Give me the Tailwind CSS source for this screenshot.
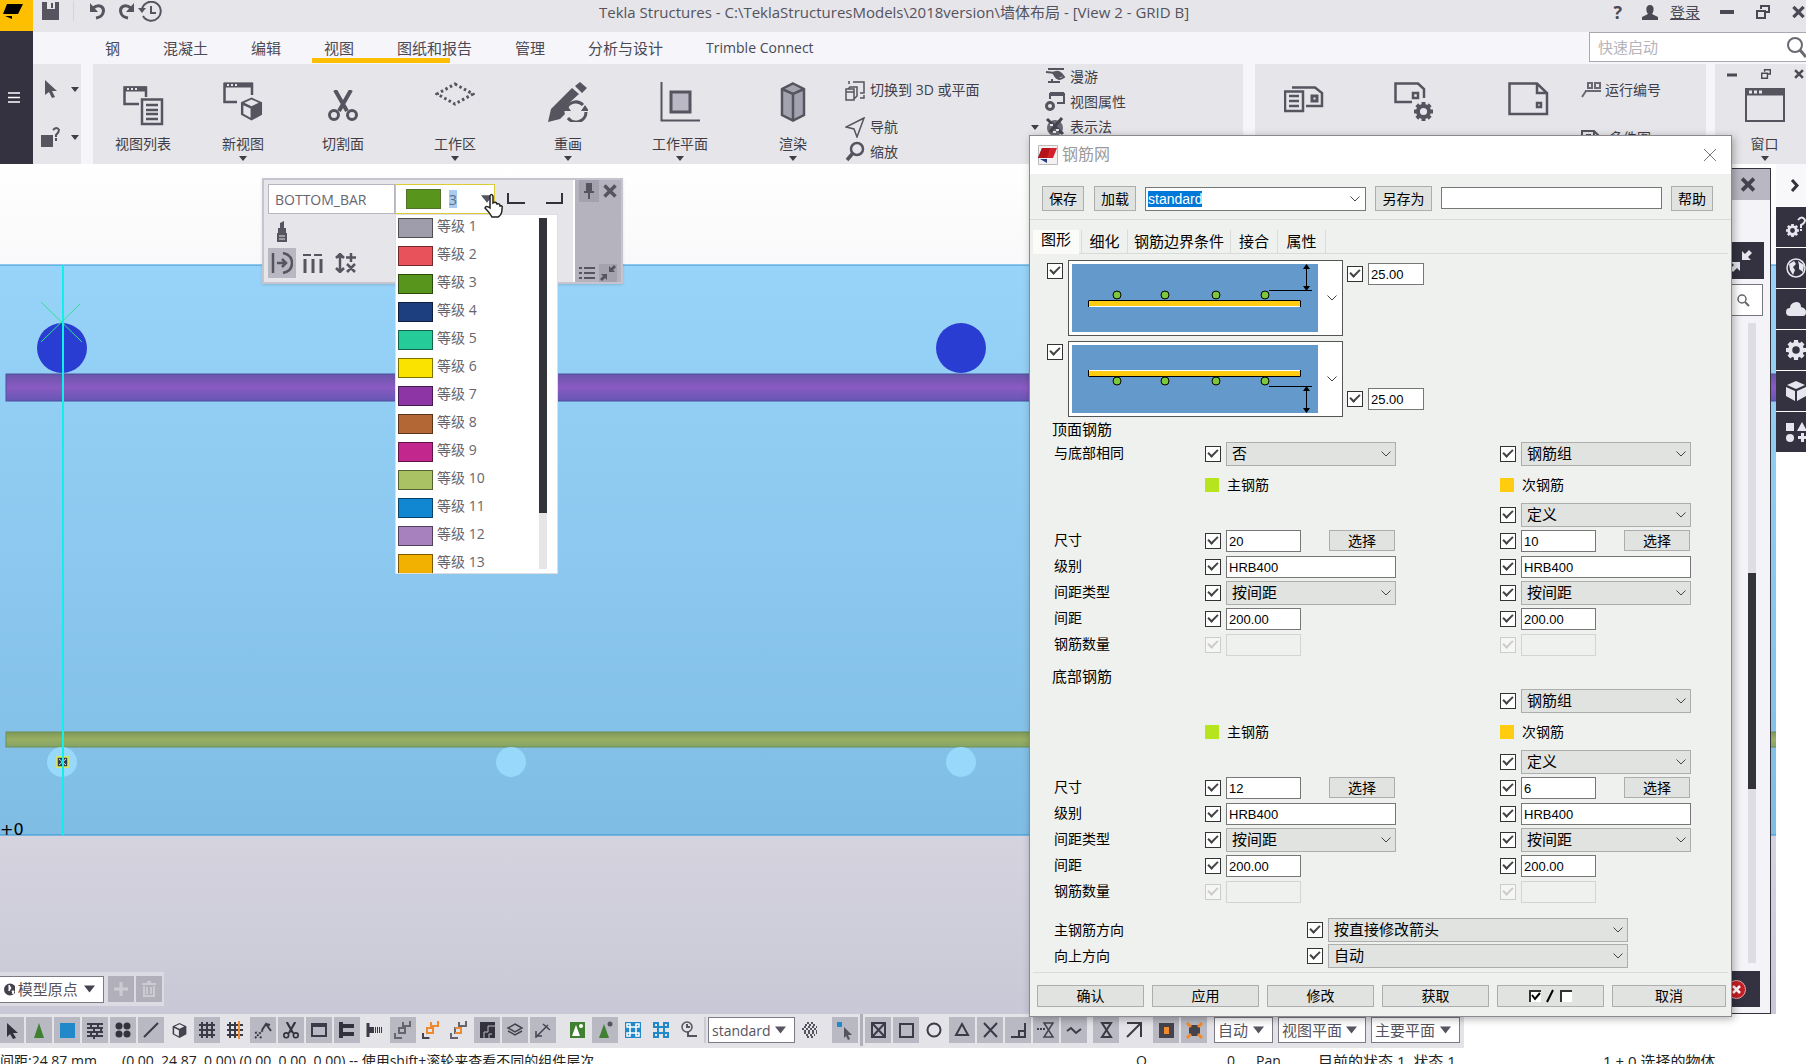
<!DOCTYPE html>
<html lang="zh-CN">
<head>
<meta charset="utf-8">
<title>Tekla Structures</title>
<script src="https://cdn.jsdelivr.net/npm/@tailwindcss/browser@4"></script>
</head>
<body class="h-screen overflow-hidden bg-white font-['Open_Sans','Noto_Sans_CJK_SC',sans-serif] text-[#3f3e48]">
<svg class="hidden">
  <symbol id="tri" viewBox="0 0 8 5"><path d="M0 0h8L4 5z" fill="currentColor"/></symbol>
  <symbol id="chev" viewBox="0 0 10 6"><path d="M0.5 0.5L5 5L9.500 0.5" fill="none" stroke="currentColor"/></symbol>
  <symbol id="restore" viewBox="0 0 14 14"><path d="M5 4V1h8v6H9M1 6h8v7H1z" fill="none" stroke="currentColor" stroke-width="2"/></symbol>
  <symbol id="cross" viewBox="0 0 14 14"><path d="M1.500 1.500L12.500 12.500M12.500 1.500L1.500 12.500" fill="none" stroke="currentColor" stroke-width="3.500"/></symbol>
  <symbol id="gear" viewBox="0 0 24 24"><path d="M12 5a7 7 0 1 0 0 14a7 7 0 1 0 0-14" fill="none" stroke="currentColor" stroke-width="5"/><path d="M12 0v5M12 19v5M0 12h5M19 12h5M3.500 3.500L7 7M17 17l3.500 3.500M20.500 3.500L17 7M7 17l-3.500 3.500" stroke="currentColor" stroke-width="5"/></symbol>
  <symbol id="cube" viewBox="0 0 24 26"><path d="M12 1L23 6V19L12 25L1 19V6z" fill="currentColor"/><path d="M3.500 9L11 12.500V22L3.500 18z" fill="#e6e6ea"/><path d="M12 3L19.500 6.500L12 10L4.500 6.500z" fill="#e6e6ea"/></symbol>
  <symbol id="scissors" viewBox="0 0 30 32"><path d="M7 0L19 21M23 0L11 21" stroke="currentColor" stroke-width="4" fill="none"/><circle cx="6" cy="25" r="4.500" fill="none" stroke="currentColor" stroke-width="3"/><circle cx="24" cy="25" r="4.500" fill="none" stroke="currentColor" stroke-width="3"/></symbol>
  <symbol id="steps" viewBox="0 0 20 20"><path d="M10 2V6H17V1M6 13H12V8H6zM2 13V18H9" fill="none" stroke="currentColor" stroke-width="2"/></symbol>
</svg>

<div class="flex h-full flex-col">
  <!-- Title, menu and ribbon -->
  <header class="flex shrink-0">
    <div class="flex w-[33px] shrink-0 flex-col bg-[#343241]">
      <div class="h-[31px] bg-[#fdbf00]"><svg width="33" height="31"><path d="M7 4H23L18 14H3zM5 16h7v3z" fill="#000"/></svg></div>
      <button aria-label="菜单" class="flex flex-1 items-center justify-center pr-[5px] text-white"><svg width="12" height="11"><path d="M0 1h12M0 5.500h12M0 10h12" stroke="#fff" stroke-width="1.500"/></svg></button>
    </div>
    <div class="min-w-0 flex-1">
      <div class="relative flex h-8 items-center justify-between bg-[#e6e5ea] pl-2">
        <div class="flex items-start gap-3 pb-2 text-[#56555f]">
          <button aria-label="保存"><svg width="20" height="20"><path d="M1 1h17v18H1z" fill="currentColor"/><path d="M6 1h8v7H6z" fill="#e6e5ea"/><path d="M10 2h2v5h-2z" fill="currentColor"/></svg></button>
          <span class="mr-1 h-5 w-px bg-[#d5d4dc]"></span>
          <button aria-label="撤销"><svg width="16" height="20"><path d="M3 7C9 2 15 6 13 12Q12 16 6 17" fill="none" stroke="currentColor" stroke-width="3"/><path d="M0 2v9h8z" fill="currentColor"/></svg></button>
          <button aria-label="重做"><svg width="16" height="20"><path d="M13 7C7 2 1 6 3 12Q4 16 10 17" fill="none" stroke="currentColor" stroke-width="3"/><path d="M16 2v9H8z" fill="currentColor"/></svg></button>
          <button aria-label="历史" class="-ml-2"><svg width="24" height="22"><path d="M4 8A9.500 9.500 0 1 1 5 15" fill="none" stroke="currentColor" stroke-width="2"/><path d="M0 7h8l-4 5z" fill="currentColor"/><path d="M13 5v7h5" fill="none" stroke="currentColor" stroke-width="2"/></svg></button>
        </div>
        <h1 class="absolute inset-x-0 top-0 left-[566px] w-fit text-[15px] leading-6 whitespace-nowrap text-[#54535d]">Tekla Structures - C:\TeklaStructuresModels\2018version\墙体布局 - [View 2 - GRID B]</h1>
        <div class="flex items-center gap-5 pr-px pb-2 text-[#4a4954]">
          <button aria-label="帮助" class="text-[18px] leading-6 font-bold">?</button>
          <div class="flex items-center gap-3"><svg width="16" height="15"><path d="M8 0c5 0 4 7 2 9l6 3v3H0v-3l6-3C4 7 3 0 8 0" fill="currentColor"/></svg><a href="#" class="text-[15px] leading-6 underline">登录</a></div>
          <button aria-label="最小化"><svg width="14" height="14"><path d="M0 7h14" stroke="currentColor" stroke-width="4"/></svg></button>
          <button aria-label="还原" class="mx-[2px]"><svg width="14" height="14"><use href="#restore"/></svg></button>
          <button aria-label="关闭"><svg width="13" height="14"><use href="#cross"/></svg></button>
        </div>
      </div>
      <div class="flex h-8 items-center justify-between bg-[#f5f5fa]">
        <nav class="flex gap-[43px] pl-[72px] text-[15px] leading-[30px] whitespace-nowrap text-[#4a4954]">
          <a href="#">钢</a><a href="#">混凝土</a><a href="#">编辑</a>
          <a href="#" class="relative">视图<span class="absolute -left-3 top-[25px] h-[5px] w-[138px] bg-[#fdbf00]"></span></a>
          <a href="#" class="relative">图纸和报告</a><a href="#">管理</a><a href="#">分析与设计</a><a href="#" class="text-[14px]">Trimble Connect</a>
        </nav>
        <label class="flex h-[30px] w-[217px] items-center self-start overflow-hidden border border-r-0 border-[#aaa9b2] bg-white pl-2">
          <input type="search" placeholder="快速启动" class="w-0 flex-1 text-[15px] outline-none placeholder:text-[#b4b4ba]">
          <svg width="20" height="22" class="shrink-0"><circle cx="9" cy="9" r="7" fill="none" stroke="#6a6973" stroke-width="2"/><path d="M14 14l6 7" stroke="#6a6973" stroke-width="3"/></svg>
        </label>
      </div>
      <div class="flex h-[100px] bg-[#e6e6ea] text-[14px] leading-5 whitespace-nowrap">
        <div class="flex w-12 shrink-0 flex-col gap-7 pt-4 pl-3">
          <button aria-label="选择" class="flex items-center gap-3"><svg width="14" height="18"><path d="M0 0l12 11H7l3 6-3 1-3-6-4 3z" fill="#55545f"/></svg><svg width="8" height="5"><use href="#tri"/></svg></button>
          <button aria-label="查询" class="-ml-1 flex items-center gap-[10px]"><svg width="20" height="22"><path d="M0 9h12v12H0z" fill="#55545f"/><path d="M12 4q4-4 6 0q0 2-3 5v2M15 12v3" stroke="#55545f" stroke-width="2" fill="none"/></svg><svg width="8" height="5"><use href="#tri"/></svg></button>
        </div>
        <div class="w-3 shrink-0 bg-[#f5f5fa]"></div>
        <div class="flex shrink-0 text-[#3f3e48]">
          <button class="flex w-[100px] flex-col items-center pt-[18px]"><svg width="40" height="40" class="overflow-visible" fill="none" stroke="#55545f" stroke-width="2.500"><path d="M16 22H1.500V5.500H23V15"/><path d="M1 7h22" stroke-width="5"/><path d="M4 7h11" stroke="#e6e6ea" stroke-width="2" stroke-dasharray="2 2"/><path d="M19 17.500h20V42H19zM23 23h12M23 28h12M23 32h12M23 37h12" stroke-width="2.500"/></svg><span class="mt-3">视图列表</span></button>
          <button class="flex w-[100px] flex-col items-center pt-[18px]"><svg width="40" height="40" fill="none" stroke="#55545f" stroke-width="2.500"><path d="M14 20H1.500V2H29V13"/><path d="M1 3h29" stroke-width="5"/><path d="M4 3h11" stroke="#e6e6ea" stroke-width="2" stroke-dasharray="2 2"/><use href="#cube" x="17" y="14" width="23" height="26" color="#55545f" stroke="none"/></svg><span class="mt-3">新视图</span><svg width="8" height="5" class="mt-[2px]"><use href="#tri"/></svg></button>
          <button class="flex w-[100px] flex-col items-center pt-[18px]"><svg width="40" height="40"><use href="#scissors" x="5" y="8" width="30" height="32" color="#55545f"/></svg><span class="mt-3">切割面</span></button>
          <button class="flex w-[124px] flex-col items-center pt-[18px]"><svg width="40" height="40"><path d="M20 2L38 12L20 22L2 12z" fill="none" stroke="#55545f" stroke-width="3" stroke-dasharray="2.500 2.600"/></svg><span class="mt-3">工作区</span><svg width="8" height="5" class="mt-[2px]"><use href="#tri"/></svg></button>
          <button class="flex w-[102px] flex-col items-center pt-[18px]"><svg width="40" height="40"><path d="M0 40L3 27L24 6L31 12L20 22Q15 28 17 32L12 37zM27 4L32 0L39 6L34 11z" fill="#55545f"/><path d="M18 28A10 10 0 0 1 35 23M38 30A10 10 0 0 1 20 36" fill="none" stroke="#55545f" stroke-width="3"/><path d="M14 29h9l-4-6zM33 29h8l-4-6z" fill="#55545f"/></svg><span class="mt-3">重画</span><svg width="8" height="5" class="mt-[2px]"><use href="#tri"/></svg></button>
          <button class="flex w-[122px] flex-col items-center pt-[18px]"><svg width="40" height="40"><path d="M1.500 0V38.500H40" fill="none" stroke="#55545f" stroke-width="2"/><path d="M11 10h19v20H11z" fill="#b9b8c4" stroke="#55545f" stroke-width="3"/></svg><span class="mt-3">工作平面</span><svg width="8" height="5" class="mt-[2px]"><use href="#tri"/></svg></button>
          <button class="flex w-[104px] flex-col items-center pt-[18px]"><svg width="40" height="40" fill="#a3a2af" stroke="#55545f" stroke-width="2.500"><path d="M20 1.500L31 7V33L20 38.500L9 33V7z"/><path d="M9 7L20 12L31 7M20 12V38" fill="none"/></svg><span class="mt-3">渲染</span><svg width="8" height="5" class="mt-[2px]"><use href="#tri"/></svg></button>
        </div>
        <div class="flex w-[192px] shrink-0 flex-col pt-[14px]">
          <button class="mb-3 flex h-[25px] items-center gap-1"><svg width="21" height="21" fill="none" stroke="#55545f" stroke-width="1.500"><path d="M1 9h8v11H1zM3 9l2-2h7v9l-3 3M1 12h8M4 4V1M8 2H19V13h-4M15 18h4v-3"/></svg>切换到 3D 或平面</button>
          <button class="flex h-[25px] items-center gap-1"><svg width="21" height="21"><path d="M19 1L1 10L9 12L12 20z" fill="none" stroke="#55545f" stroke-width="1.500"/></svg>导航</button>
          <button class="flex h-[25px] items-center gap-1"><svg width="21" height="21"><circle cx="12" cy="8" r="6" fill="none" stroke="#55545f" stroke-width="2.500"/><path d="M8 12L2 19" stroke="#55545f" stroke-width="3.500"/></svg>缩放</button>
        </div>
        <div class="flex w-[206px] shrink-0">
          <svg width="8" height="5" class="mt-[61px] ml-[-6px]"><use href="#tri"/></svg>
          <div class="ml-[6px] flex flex-col">
            <button class="flex h-[25px] items-center gap-1"><svg width="21" height="21"><path d="M3 3h16M1 6L10 7M8 7q6-4 11 4q-6 5-10-3zM3 16h12M7 13v3" fill="none" stroke="#55545f" stroke-width="2"/><path d="M9 7q5-3 9 3l-6 3z" fill="#55545f"/></svg>漫游</button>
            <button class="flex h-[25px] items-center gap-1"><svg width="21" height="21" fill="none" stroke="#55545f" stroke-width="2"><path d="M5 8V3H19V12H12"/><path d="M5 3h14" stroke-width="4"/><circle cx="5" cy="15" r="3.500" stroke-width="3"/></svg>视图属性</button>
            <button class="flex h-[25px] items-center gap-1"><svg width="21" height="21"><circle cx="10" cy="12" r="8" fill="#6a6973"/><path d="M2 3L18 18M17 2L5 16" stroke="#44434d" stroke-width="3"/><path d="M5 9h3M11 14h3M8 16h3" stroke="#e6e6ea" stroke-width="2"/></svg>表示法</button>
          </div>
        </div>
        <div class="w-3 shrink-0 bg-[#f5f5fa]"></div>
        <div class="flex min-w-0 flex-1 items-start pl-[29px]">
          <button aria-label="图纸列表" class="pt-[18px]"><svg width="40" height="40" fill="none" stroke="#55545f" stroke-width="2.500"><path d="M1 9.500h18V29H1zM5 14h10M5 19h10M5 24h10M8 5.500H31L38 11V24H22"/><path d="M28 14h5v5h-5z" stroke-width="3"/></svg></button>
          <button aria-label="图纸设置" class="ml-[70px] pt-[18px]"><svg width="40" height="40" fill="none" stroke="#55545f" stroke-width="2.500"><path d="M18 20H1.500V1.500H24L30 7V16"/><path d="M19 11h5v5h-5z"/><use href="#gear" x="20" y="20" width="19" height="19" color="#55545f"/></svg></button>
          <button aria-label="图纸" class="ml-[74px] pt-[18px]"><svg width="41" height="40" fill="none" stroke="#55545f" stroke-width="2.500"><path d="M1.500 1.500H29L39 11V32H1.500zM29 1.500V11H39"/><path d="M29 21h4v4h-4z"/></svg></button>
          <div class="ml-8 flex flex-col gap-7 pt-4">
            <button class="flex items-center gap-1"><svg width="20" height="16" fill="none" stroke="#6a6973" stroke-width="2"><path d="M7 1h4v5H7zM14 1h5v5h-5zM4 9h16M5 9L1 15"/></svg>运行编号</button>
            <button class="flex items-center gap-2"><svg width="20" height="16" fill="none" stroke="#55545f" stroke-width="2"><path d="M1 16V1h12l6 6v9M5 5h4v5M13 1v6"/></svg>多件图</button>
          </div>
        </div>
        <div class="w-[9px] shrink-0 bg-[#f5f5fa]"></div>
        <div class="flex w-[91px] shrink-0 flex-col">
          <div class="flex items-center justify-between pt-1 pr-[2px] pl-3 text-[#4a4954]"><button aria-label="最小化视图"><svg width="10" height="12"><path d="M0 7h10" stroke="currentColor" stroke-width="3"/></svg></button><button aria-label="还原视图"><svg width="10" height="10"><use href="#restore"/></svg></button><button aria-label="关闭视图"><svg width="10" height="10"><use href="#cross"/></svg></button></div>
          <button class="ml-2 flex flex-col items-center pt-2"><svg width="40" height="34" fill="none" stroke="#55545f" stroke-width="2"><path d="M1 1h38v32H1z"/><path d="M1 4h38" stroke-width="7"/><path d="M4 4h13" stroke="#e6e6ea" stroke-width="3" stroke-dasharray="3 2"/></svg><span class="mt-3">窗口</span><svg width="8" height="5" class="mt-[2px]"><use href="#tri"/></svg></button>
        </div>
      </div>
    </div>
  </header>

  <!-- Model view with docked side pane -->
  <main class="flex min-h-0 flex-1">
    <section class="relative min-w-0 flex-1 overflow-hidden bg-linear-to-b from-white to-[#c9c8d6]">
      <svg width="100%" height="100%" class="block">
        <defs>
          <linearGradient id="sky" x2="0" y2="1"><stop offset="0" stop-color="#98d4f9"/><stop offset="1" stop-color="#80bde5"/></linearGradient>
          <linearGradient id="violet" x2="0" y2="1"><stop offset="0" stop-color="#6855a8"/><stop offset=".5" stop-color="#8a5bc2"/><stop offset="1" stop-color="#6657b4"/></linearGradient>
          <linearGradient id="olive" x2="0" y2="1"><stop offset="0" stop-color="#7f9a58"/><stop offset=".5" stop-color="#98ae63"/><stop offset="1" stop-color="#84a566"/></linearGradient>
        </defs>
        <rect x="-2" y="101" width="102%" height="570" fill="url(#sky)" stroke="#2b95d6"/>
        <rect x="6" y="210" width="100%" height="27" fill="url(#violet)" stroke="#4b509f"/>
        <rect x="6" y="568" width="100%" height="15" fill="url(#olive)" stroke="#6f8d55"/>
        <circle cx="62" cy="184" r="25" fill="#2a3dd2"/><circle cx="961" cy="184" r="25" fill="#2a3dd2"/>
        <g fill="#98d8fa"><circle cx="62" cy="598" r="15"/><circle cx="511" cy="598" r="15"/><circle cx="961" cy="598" r="15"/></g>
        <path d="M41 138L82 178M80 140L41 178" stroke="#2fe38d"/>
        <rect x="57" y="593" width="11" height="10" fill="#333b52" stroke="#e8ea3a" stroke-width="1.500"/><path d="M59 595l7 6M66 595l-7 6" stroke="#cfe5ff"/>
        <path d="M63 101V671" stroke="#10efe8" stroke-width="2"/>
        <text x="0" y="671" font-size="16" fill="#000" font-family="DejaVu Sans">+0</text>
      </svg>

      <!-- Contextual toolbar -->
      <div class="absolute top-[14px] left-[262px] flex h-[106px] w-[361px] border-2 border-[#c6c5cf] bg-[#e6e6ea] shadow">
        <div class="flex-1 border-r-2 border-white pt-1 pl-1">
          <div class="flex h-[30px] items-center">
            <input aria-label="名称" value="BOTTOM_BAR" class="h-full w-[127px] border border-[#b7b6bf] bg-white px-[6px] text-[14px] text-[#66656e]">
            <label class="flex h-full w-[100px] items-center gap-2 border border-[#dccb32] bg-white pl-[10px]">
              <span class="h-5 w-[35px] border border-[#54702f] bg-[#57951c]"></span>
              <input aria-label="等级" value="3" class="field-sizing-content h-[18px] bg-[#a9cdf0] text-[14px] text-[#5a6e88]">
              <svg width="12" height="8" class="ml-[16px] text-[#55545f]"><use href="#tri"/></svg>
            </label>
            <button aria-label="起点弯钩" class="ml-3"><svg width="19" height="12"><path d="M1 0V10H18" fill="none" stroke="#33323c" stroke-width="2"/></svg></button>
            <button aria-label="终点弯钩" class="ml-[19px]"><svg width="19" height="12"><path d="M1 10H17V0" fill="none" stroke="#33323c" stroke-width="2"/></svg></button>
          </div>
          <button aria-label="画笔" class="ml-2 block h-[34px]"><svg width="12" height="21"><path d="M4 2L8 0V7h2v5H2V7h2zM1 12h10v9H1z" fill="#55545f"/><path d="M3 15h6M3 18h6" stroke="#e6e6ea"/></svg></button>
          <div class="flex items-center">
            <button aria-label="偏移" class="flex h-[30px] w-[28px] items-center justify-center bg-[#b9b8c2]"><svg width="22" height="22" fill="none" stroke="#55545f" stroke-width="2.500"><path d="M2 1V21M6 11h9M11 7l4 4l-4 4M12 1q9 2 9 10t-9 10"/></svg></button>
            <button aria-label="间距" class="ml-[6px]"><svg width="22" height="20" fill="none" stroke="#55545f" stroke-width="3"><path d="M3 6V20M11 6V20M19 6V20"/><path d="M1 2h8M12 2h8" stroke-width="2"/></svg></button>
            <button aria-label="增减" class="ml-[11px]"><svg width="22" height="20" fill="none" stroke="#55545f" stroke-width="2.500"><path d="M5 2V18M1 5l4-4l4 4M1 15l4 4l4-4M16 0V9M11 4.500h10M12 11l8 8M20 11l-8 8"/></svg></button>
          </div>
        </div>
        <div class="flex w-[46px] flex-col justify-between bg-[#b4b3be] p-1 pt-0 text-[#55545f]">
          <div class="flex items-center gap-1"><button aria-label="固定" class="flex h-[22px] w-5 items-center justify-center bg-[#a3a2ae]"><svg width="12" height="16"><path d="M3 0h6v8h2v2H7v6H5v-6H1V8h2z" fill="currentColor"/></svg></button><button aria-label="关闭工具栏"><svg width="14" height="14"><use href="#cross"/></svg></button></div>
          <div class="-mb-1 flex items-center gap-1"><button aria-label="列表"><svg width="16" height="14"><path d="M0 2h3M5 2h11M0 7h3M5 7h11M0 12h3M5 12h11" stroke="currentColor" stroke-width="2"/></svg></button><button aria-label="折叠" class="bg-[#a3a2ae]"><svg width="18" height="18" fill="#55545f"><path d="M2 10h6v6l-2-2-3 3-2-2 3-3zM16 8h-6V2l2 2 3-3 2 2-3 3z"/></svg></button></div>
        </div>
      </div>
      <!-- Open class list -->
      <div class="absolute top-[50px] left-[395px] flex h-[360px] w-[163px] overflow-hidden border border-[#dddde2] bg-white">
        <ul id="classes" class="flex flex-1 flex-col gap-2 pt-[3px] pl-[2px]" role="listbox" aria-label="等级"></ul>
        <div class="mr-[10px] mt-[3px] mb-1 w-2 bg-[#e6e6e8]"><div class="h-[295px] bg-[#33333a]"></div></div>
      </div>
      <svg width="20" height="25" class="absolute top-[29px] left-[484px]"><path d="M6 14V3q1.500-3 3 0V10q3-2 4 1q3-1 3 2q3-1 2 3q0 6-4 8H8Q6 20 1 15q1-3 5 0z" fill="#fff" stroke="#222" stroke-width="1.500"/></svg>

      <!-- Origin picker -->
      <div class="absolute bottom-2 left-0 flex h-[34px] items-center gap-[2px] bg-[#dcdbe3] pr-[2px]">
        <label class="relative mr-[2px] flex h-[27px] w-[104px] items-center border border-l-0 border-[#7c7b85] bg-white pl-1">
          <svg width="12" height="13"><circle cx="6" cy="6.500" r="5" fill="#44434d" stroke="#44434d" stroke-width="2"/><path d="M5 2l2 3-2 3zM8 8l2 0-1 3z" fill="#fff" stroke="#fff"/></svg>
          <select aria-label="原点" class="h-full w-full appearance-none pl-[3px] text-[15px] text-[#55545f]"><option>模型原点</option></select>
          <svg width="11" height="8" class="pointer-events-none absolute right-2 text-[#44434d]"><use href="#tri"/></svg>
        </label>
        <button aria-label="添加" class="flex h-[26px] w-[26px] items-center justify-center bg-[#b1b0ba]"><svg width="16" height="16"><path d="M8 1v14M1 8h14" stroke="#cccbd4" stroke-width="3"/></svg></button>
        <button aria-label="删除" class="flex h-[26px] w-[26px] items-center justify-center bg-[#b1b0ba]"><svg width="14" height="16" fill="none" stroke="#cccbd4" stroke-width="2"><path d="M0 3h14M5 1h4M2 5v10h10V5M5 6v7M9 6v7"/></svg></button>
      </div>

      <!-- Property pane behind the dialog -->
      <aside class="absolute top-1 right-[5px] bottom-0 flex w-[240px] flex-col items-end border border-[#33323c] bg-[#f4f4f8]">
        <div class="flex h-[31px] w-full items-center justify-end bg-[#b9b8c2] pr-[14px] text-[#44434d]"><button aria-label="关闭窗格"><svg width="16" height="15"><use href="#cross"/></svg></button></div>
        <button aria-label="折叠窗格" class="mt-[42px] mr-[6px] flex h-[37px] w-[60px] items-center justify-end bg-[#343241] pr-[12px]"><svg width="22" height="22" fill="#e6e6ee"><path d="M1 12h9v9l-3-3-4 4-3-3 4-4zM21 10h-9V1l3 3 4-4 3 3-4 4z"/></svg></button>
        <label class="mt-[5px] mr-[7px] flex h-8 w-[150px] items-center justify-end border border-[#77767f] bg-white pr-3"><input aria-label="搜索属性" class="w-24"><svg width="13" height="13"><circle cx="5" cy="5" r="4" fill="none" stroke="#66656e" stroke-width="1.500"/><path d="M8 8l4 4" stroke="#66656e" stroke-width="2"/></svg></label>
        <div class="mt-[7px] mr-[14px] w-2 flex-1 bg-[#dddde3]"><div class="mt-[250px] h-[216px] bg-[#33333a]"></div></div>
        <button aria-label="取消" class="mt-2 mr-[10px] mb-[6px] flex h-[36px] w-[80px] items-center justify-end bg-[#343241] pr-[14px]"><svg width="19" height="19"><circle cx="9.500" cy="9.500" r="9" fill="#c51f26" stroke="#e8a7a7"/><path d="M6 6l7 7M13 6l-7 7" stroke="#fff" stroke-width="2.500"/></svg></button>
      </aside>
    </section>

    <nav class="flex w-[30px] shrink-0 flex-col gap-px overflow-hidden bg-white">
      <button aria-label="展开" class="flex h-[42px] items-center justify-center bg-[#f8f8fb] pl-2"><svg width="10" height="13"><path d="M2 1l5 5.500L2 12" fill="none" stroke="#33323c" stroke-width="3"/></svg></button>
      <button aria-label="应用帮助" class="h-10 bg-[#343241] pl-[10px] text-[#e6e6ee]"><svg width="20" height="22"><use href="#gear" x="0" y="8" width="13" height="13"/><path d="M12 4q4-5 7 0q0 3-4 5v3M15 13v2" fill="none" stroke="currentColor" stroke-width="2"/></svg></button>
      <button aria-label="在线" class="h-10 bg-[#343241] pl-[10px] text-[#e6e6ee]"><svg width="20" height="20"><circle cx="10" cy="10" r="9" fill="none" stroke="currentColor" stroke-width="1.500"/><path d="M3 6l5-3 2 3-3 3 2 3-2 5-3-5zM12 3l6 4-1 7-4-3v-4z" fill="currentColor"/></svg></button>
      <button aria-label="云" class="h-10 bg-[#343241] pl-[10px] text-[#e6e6ee]"><svg width="20" height="20"><path d="M4 17a4 4 0 0 1 0-8q0-5 6-6q5 0 5 5q5 1 5 5q0 4-3 4z" fill="currentColor"/></svg></button>
      <button aria-label="设置" class="h-10 bg-[#343241] pl-[10px] text-[#e6e6ee]"><svg width="20" height="20"><use href="#gear"/></svg></button>
      <button aria-label="组件" class="h-10 bg-[#343241] pl-[10px] text-[#e6e6ee]"><svg width="20" height="20"><path d="M10 0l9 4-9 4-9-4zM0 6l9 4v10l-9-5zM20 6l-9 4v10l9-5z" fill="currentColor"/></svg></button>
      <button aria-label="形状" class="h-10 bg-[#343241] pl-[10px] text-[#e6e6ee]"><svg width="20" height="20"><path d="M0 1h8v8H0zM11 9l5-9 5 9zM15 11h3v3h3v3h-3v3h-3v-3h-3v-3h3z" fill="currentColor"/><circle cx="4" cy="16" r="4" fill="currentColor"/></svg></button>
    </nav>
  </main>

  <!-- Selection and snapping switches -->
  <footer class="shrink-0">
    <div class="flex h-[34px] w-[1464px] items-center gap-[2px] overflow-hidden bg-[#e3e3e8] pb-[2px] text-[15px] text-[#55545f]">
      <div id="switches" class="-ml-[2px] flex items-center gap-[2px]"></div>
      <span class="h-[26px] w-[2px] bg-[#cccbd4]"></span>
      <label class="relative flex h-[26px] w-[87px] items-center border border-[#7c7b85] bg-white"><select aria-label="过滤" class="h-full w-full appearance-none pl-[3px] text-[14px]"><option>standard</option></select><svg width="11" height="8" class="pointer-events-none absolute right-2"><use href="#tri"/></svg></label>
      <button aria-label="过滤设置" class="flex h-[26px] w-[26px] items-center justify-center"><svg width="16" height="16" fill="none" stroke="#55545f" stroke-width="2" stroke-dasharray="2 2"><path d="M5 1h7M2 5h13M2 9h13M4 13h9"/><path d="M3 3h11M0 7h16M2 11h13M5 15h7"/></svg></button>
      <span class="w-[5px]"></span>
      <button aria-label="直接修改" class="flex h-[26px] w-[26px] items-center justify-center bg-[#b9b9c3]"><svg width="18" height="20"><path d="M1 2h5v5H1z" fill="#2188c9"/><path d="M8 7l8 8h-4l2 4-2 1-2-4-2 2z" fill="#55545f"/></svg></button>
      <span class="h-[32px] w-[3px] bg-[#b1b0ba]"></span>
      <div id="snaps" class="flex items-center gap-[2px]"></div>
      <span class="w-[3px]"></span>
      <div class="flex gap-[5px]">
        <label class="relative flex h-[26px] w-[59px] items-center border border-[#7c7b85] bg-white"><select aria-label="捕捉模式" class="h-full w-full appearance-none pl-[3px]"><option>自动</option></select><svg width="11" height="8" class="pointer-events-none absolute right-2"><use href="#tri"/></svg></label>
        <label class="relative flex h-[26px] w-[88px] items-center border border-[#7c7b85] bg-white"><select aria-label="平面" class="h-full w-full appearance-none pl-[3px]"><option>视图平面</option></select><svg width="11" height="8" class="pointer-events-none absolute right-2"><use href="#tri"/></svg></label>
        <label class="relative flex h-[26px] w-[89px] items-center border border-[#7c7b85] bg-white"><select aria-label="主平面" class="h-full w-full appearance-none pl-[3px]"><option>主要平面</option></select><svg width="11" height="8" class="pointer-events-none absolute right-2"><use href="#tri"/></svg></label>
      </div>
    </div>
    <div class="flex h-4 overflow-hidden bg-white pt-[2px] text-[14px] leading-[22px] whitespace-nowrap text-[#222]">
      <span class="w-[122px] shrink-0">间距:24.87 mm</span>
      <span class="w-[1014px] shrink-0">(0.00, 24.87, 0.00) (0.00, 0.00, 0.00) -- 使用shift+滚轮来查看不同的组件层次</span>
      <span class="w-[91px] shrink-0">O</span><span class="w-[29px] shrink-0">0</span><span class="w-[62px] shrink-0">Pan</span>
      <span class="w-[285px] shrink-0 text-[15px]">目前的状态 1, 状态 1</span><span class="text-[15px]">1 + 0 选择的物体</span>
    </div>
  </footer>
</div>

<!-- Rebar mesh dialog -->
<form class="absolute top-[135px] right-[74px] flex w-[703px] flex-col border border-[#8a8a90] bg-[#eff1ee] font-['Liberation_Sans','Noto_Sans_CJK_SC',sans-serif] text-[14px] leading-5 text-black shadow-[2px_2px_8px_rgba(0,0,0,0.3)]" aria-label="钢筋网">
  <div class="flex h-[38px] items-center bg-white pl-2">
    <svg width="20" height="20"><path d="M.5.5h19v19H.5z" fill="#f3f1f4" stroke="#bbb"/><path d="M4 3H19L15 13H0z" fill="#d32229"/><path d="M4 3h8l-3 10H0z" fill="#b3131a"/><path d="M2 14h7v4z" fill="#233c86"/></svg>
    <h2 class="ml-1 text-[16px] text-[#9a9a9a]">钢筋网</h2>
    <button type="button" aria-label="关闭对话框" class="mr-[15px] ml-auto"><svg width="12" height="12"><path d="M0 0l12 12M12 0L0 12" stroke="#777"/></svg></button>
  </div>
  <div class="flex h-[46px] items-center border-b border-[#d9dbd8] px-3 pt-1">
    <button type="button" class="h-[25px] w-[42px] border border-[#adadad] bg-[#e1e3e0]">保存</button>
    <button type="button" class="ml-[10px] h-[25px] w-[42px] border border-[#adadad] bg-[#e1e3e0]">加载</button>
    <label class="ml-[9px] flex h-6 w-[221px] items-center justify-between border border-[#777] bg-white pr-[5px] pl-[2px]"><input aria-label="设置文件" value="standard" class="field-sizing-content h-4 bg-[#0078d7] leading-4 text-white"><svg width="10" height="6" class="text-[#444]"><use href="#chev"/></svg></label>
    <button type="button" class="ml-[9px] h-[25px] w-[57px] border border-[#adadad] bg-[#e1e3e0]">另存为</button>
    <input aria-label="另存为名称" class="ml-[9px] h-[22px] w-[221px] self-start mt-[9px] border border-[#777] bg-white px-1">
    <button type="button" class="ml-[9px] h-[25px] w-[42px] border border-[#adadad] bg-[#e1e3e0]">帮助</button>
  </div>
  <div class="mx-[3px] mt-[10px] flex h-[24px] items-center border-b border-[#d9dbd8] text-[15px] whitespace-nowrap" role="tablist">
    <button type="button" role="tab" aria-selected="true" class="h-[24px] w-[46px] bg-[#fbfcfa] pb-1">图形</button>
    <button type="button" role="tab" class="ml-[2px] h-full w-[46px] border-l border-[#d9dbd8]">细化</button>
    <button type="button" role="tab" class="h-full w-[104px] border-x border-[#d9dbd8]">钢筋边界条件</button>
    <button type="button" role="tab" class="h-full w-[47px] border-r border-[#d9dbd8]">接合</button>
    <button type="button" role="tab" class="h-full w-[48px] border-r border-[#d9dbd8]">属性</button>
  </div>

  <div class="flex flex-col gap-[5px] pt-[6px] pl-[17px]">
    <div class="flex items-start">
      <input type="checkbox" checked aria-label="顶面保护层图" class="mt-[3px] h-4 w-4 appearance-none border border-[#333] bg-white before:ml-1 before:block before:h-[10px] before:w-[6px] before:rotate-45 before:border-r-2 before:border-b-2 before:border-[#444]">
      <button type="button" aria-label="顶面保护层" class="ml-[5px] flex h-[76px] w-[275px] items-center border border-[#555] bg-white pl-[3px]">
        <svg width="246" height="68"><path d="M0 0h246v68H0z" fill="#6499cb"/><path d="M16 36h213v7H16z" fill="#fff"/><path d="M17 37h211v5H17z" fill="#ffcc10"/><path d="M16.500 43V36.500H228.500V43M197 26.500h43M234.500 3V24" fill="none" stroke="#000"/><path d="M234.500 0l3.500 5h-7zM234.500 27l3.500-5h-7z"/><g fill="#7cc83a" stroke="#000"><circle cx="45" cy="31" r="4"/><circle cx="93" cy="31" r="4"/><circle cx="144" cy="31" r="4"/><circle cx="193" cy="31" r="4"/></g></svg>
        <svg width="10" height="6" class="ml-[9px] text-[#444]"><use href="#chev"/></svg>
      </button>
      <input type="checkbox" checked aria-label="顶面保护层厚度" class="mt-[6px] ml-1 h-4 w-4 appearance-none border border-[#333] bg-white before:ml-1 before:block before:h-[10px] before:w-[6px] before:rotate-45 before:border-r-2 before:border-b-2 before:border-[#444]">
      <input aria-label="顶面厚度" value="25.00" class="mt-[3px] ml-[5px] h-[22px] w-14 border border-[#777] bg-white px-[2px] text-[13px]">
    </div>
    <div class="flex items-start">
      <input type="checkbox" checked aria-label="底面保护层图" class="mt-[3px] h-4 w-4 appearance-none border border-[#333] bg-white before:ml-1 before:block before:h-[10px] before:w-[6px] before:rotate-45 before:border-r-2 before:border-b-2 before:border-[#444]">
      <button type="button" aria-label="底面保护层" class="ml-[5px] flex h-[76px] w-[275px] items-center border border-[#555] bg-white pl-[3px]">
        <svg width="246" height="68"><path d="M0 0h246v68H0z" fill="#6499cb"/><path d="M16 25h213v7H16z" fill="#fff"/><path d="M17 26h211v5H17z" fill="#ffcc10"/><path d="M16.500 25V31.500H228.500V25M197 41.500h43M234.500 44V66" fill="none" stroke="#000"/><path d="M234.500 41l3.500 5h-7zM234.500 68l3.500-5h-7z"/><g fill="#7cc83a" stroke="#000"><circle cx="45" cy="36" r="4"/><circle cx="93" cy="36" r="4"/><circle cx="144" cy="36" r="4"/><circle cx="193" cy="36" r="4"/></g></svg>
        <svg width="10" height="6" class="ml-[9px] text-[#444]"><use href="#chev"/></svg>
      </button>
      <input type="checkbox" checked aria-label="底面保护层厚度" class="mt-[50px] ml-1 h-4 w-4 appearance-none border border-[#333] bg-white before:ml-1 before:block before:h-[10px] before:w-[6px] before:rotate-45 before:border-r-2 before:border-b-2 before:border-[#444]">
      <input aria-label="底面厚度" value="25.00" class="mt-[47px] ml-[5px] h-[22px] w-14 border border-[#777] bg-white px-[2px] text-[13px]">
    </div>
  </div>

  <div id="mesh" class="flex flex-col gap-2 pt-[2px] pl-[22px]"></div>

  <div id="dirs" class="mx-[3px] mt-[12px] border-b border-[#d9dbd8] pb-[3px] pl-[21px]"></div>
  <div class="flex h-[43px] items-center gap-2 pt-[3px] pr-[5px] pl-[7px]">
    <button type="button" class="h-[22px] w-[107px] border border-[#adadad] bg-[#e1e3e0]">确认</button>
    <button type="button" class="h-[22px] w-[107px] border border-[#adadad] bg-[#e1e3e0]">应用</button>
    <button type="button" class="h-[22px] w-[107px] border border-[#adadad] bg-[#e1e3e0]">修改</button>
    <button type="button" class="h-[22px] w-[107px] border border-[#adadad] bg-[#e1e3e0]">获取</button>
    <button type="button" aria-label="全选或全不选" class="flex h-[22px] w-[107px] items-center justify-center border border-[#adadad] bg-[#e1e3e0]"><svg width="43" height="14"><path d="M1 13V2h11M32 13V2h11" fill="none" stroke="#333" stroke-width="2"/><path d="M2 3h10v10H2zM33 3h10v10H33z" fill="#fff"/><path d="M3 6l3 4l5-6M18 13L24 1" fill="none" stroke="#000" stroke-width="2"/></svg></button>
    <button type="button" class="h-[22px] flex-1 border border-[#adadad] bg-[#e1e3e0]">取消</button>
  </div>
</form>

<script>
// Colour classes
const classes = ['#9f9dab','#e8525a','#57951c','#1d3f80','#25cb98','#fbe300','#8d35a4','#b36735','#c1278d','#aac263','#1087d0','#a781bd','#f2b000'];
document.getElementById('classes').innerHTML = classes.map((c, i) =>
  `<li role="option" class="flex h-5 shrink-0 items-center gap-1 text-[14px] leading-5 whitespace-nowrap text-[#66656e]"><span class="h-5 w-[35px] border border-black/50" style="background:${c}"></span><span class="-mt-1">等级 ${i + 1}</span></li>`).join('');

// Dialog form parts
const tick = (label, off) => off
  ? `<input type="checkbox" checked disabled aria-label="${label}" class="h-4 w-4 shrink-0 appearance-none border border-[#ccc] bg-[#f6f7f5] before:ml-1 before:block before:h-[10px] before:w-[6px] before:rotate-45 before:border-r-2 before:border-b-2 before:border-[#ccc]">`
  : `<input type="checkbox" checked aria-label="${label}" class="h-4 w-4 shrink-0 appearance-none border border-[#333] bg-white before:ml-1 before:block before:h-[10px] before:w-[6px] before:rotate-45 before:border-r-2 before:border-b-2 before:border-[#444]">`;
const drop = (label, v, wide) => `<span class="relative flex h-6 ${wide ? 'w-[300px]' : 'w-[170px]'} items-center"><select aria-label="${label}" class="h-full w-full appearance-none border border-[#adadad] bg-[#e1e3e0] px-[5px] text-[15px] leading-5"><option>${v}</option></select><svg width="10" height="6" class="pointer-events-none absolute right-[5px] text-[#444]"><use href="#chev"/></svg></span>`;
const field = (label, v, wide) => `<input aria-label="${label}" value="${v}" class="h-[22px] ${wide ? 'w-[170px]' : 'w-[75px]'} border border-[#777] bg-white px-[2px] text-[13px]">`;
const cell = html => `<div class="flex items-center gap-[5px]">${html}</div>`;
const row = (label, a, b) => `<div class="grid h-[26px] grid-cols-[151px_295px_1fr] items-center pl-[2px]"><span class="-mt-[2px]">${label}</span>${a || '<span></span>'}${b || '<span></span>'}</div>`;
const pick = '<button type="button" class="ml-[23px] h-[21px] w-[66px] self-start border border-[#adadad] bg-[#e1e3e0] leading-4">选择</button>';
const block = (title, same, d1, d2) => {
  const side = d => [
    cell(tick('尺寸') + field('尺寸', d) + pick),
    cell(tick('级别') + field('级别', 'HRB400', true)),
    cell(tick('间距类型') + drop('间距类型', '按间距')),
    cell(tick('间距') + field('间距', '200.00')),
    cell(tick('钢筋数量', true) + '<input aria-label="钢筋数量" disabled class="h-[22px] w-[75px] border border-[#d3d5d2]">')];
  const L = side(d1), R = side(d2);
  return `<fieldset><legend class="h-[22px] text-[15px] leading-[22px]">${title}</legend>`
    + row(same ? '与底部相同' : '', same ? cell(tick('与底部相同') + drop('与底部相同', '否')) : '', cell(tick('组') + drop('组', '钢筋组')))
    + `<div class="grid h-[35px] grid-cols-[151px_295px_1fr] items-center pl-[2px]"><span></span><div class="flex items-center gap-2"><span class="h-[14px] w-[14px] bg-[#b6e51d]"></span>主钢筋</div><div class="flex items-center gap-2"><span class="h-[14px] w-[14px] bg-[#ffcc10]"></span>次钢筋</div></div>`
    + row('', '', cell(tick('定义') + drop('定义', '定义')))
    + ['尺寸', '级别', '间距类型', '间距', '钢筋数量'].map((n, i) => row(n, L[i], R[i])).join('') + '</fieldset>';
};
document.getElementById('mesh').innerHTML = block('顶面钢筋', true, 20, 10) + block('底部钢筋', false, 12, 6);
document.getElementById('dirs').innerHTML = [['主钢筋方向', '按直接修改箭头'], ['向上方向', '自动']].map(([l, v]) =>
  `<div class="grid h-[26px] grid-cols-[253px_1fr] items-center"><span>${l}</span>${cell(tick(l) + drop(l, v, true))}</div>`).join('');

// Switch buttons: [name, pressed, drawing]
const S = 'fill="none" stroke="#3b3a46" stroke-width="2"';
const button = ([n, on, d]) => n === '|' ? `<span class="h-[26px] ${on ? 'w-1' : 'w-[2px]'}"></span>`
  : `<button aria-label="${n}" aria-pressed="${!!on}" class="flex h-[26px] w-[26px] items-center justify-center ${on ? 'bg-[#b9b9c3]' : ''}"><svg width="20" height="20" viewBox="0 0 20 20">${d}</svg></button>`;
document.getElementById('switches').innerHTML = [
  ['选择全部', 1, '<path d="M6 3l11 10h-5l3 5-3 1-3-5-3 3z" fill="#33323c"/>'],
  ['选择组件', 1, '<path d="M10 3l5 15H5z" fill="#3f8130"/>'],
  ['选择零件', 1, '<path d="M3 3h15v15H3z" fill="#2188c9"/>'],
  ['选择面', 1, `<path d="M2 4h16M2 8h16M2 12h16M2 16h16M6 4v4M13 4v4M9 8v4M16 8v4M6 12v4M12 12v4M9 16v3" ${S}/>`],
  ['选择点', 1, '<g fill="#33323c"><circle cx="6" cy="6" r="3.500"/><circle cx="14" cy="6" r="3.500"/><circle cx="6" cy="14" r="3.500"/><circle cx="14" cy="14" r="3.500"/></g>'],
  ['选择线', 1, `<path d="M3 17L17 3" ${S}/>`],
  ['选择构件', 0, '<use href="#cube" x="3" y="2" width="15" height="17" color="#44434d"/>'],
  ['选择轴网', 1, `<path d="M5 2v16M10 2v16M15 2v16M2 5h16M2 10h16M2 15h16" ${S}/>`],
  ['选择单轴', 0, `<path d="M5 2v16M10 2v16M2 5h16M2 10h16M2 15h16" ${S}/><path d="M14 1v18" stroke="#ee8a2d" stroke-width="2"/>`],
  ['选择焊缝', 1, `<path d="M9 10L13 4l5 7M13 4L17 5" ${S}/><path d="M2 18l8-8M2 13l3-1M7 18l2-2" stroke="#3b3a46" stroke-width="2" stroke-dasharray="2 1"/>`],
  ['选择切割', 1, '<use href="#scissors" x="2" y="2" width="16" height="17" color="#33323c"/>'],
  ['选择视图', 1, `<path d="M3 4h14v12H3zM3 6h14" ${S}/>`],
  ['选择接头', 1, `<path d="M4 2v16M4 6h13M4 14h13" fill="none" stroke="#33323c" stroke-width="4"/>`],
  ['选择螺栓', 0, `<path d="M3 3v14" fill="none" stroke="#3b3a46" stroke-width="3"/><path d="M4 10h5" stroke="#3b3a46" stroke-width="6"/><path d="M10 10h8" stroke="#3b3a46" stroke-width="6" stroke-dasharray="1 1"/>`],
  ['选择钢筋', 1, '<use href="#steps" color="#66656e"/>'],
  ['选择钢筋组', 0, '<use href="#steps" color="#ee8a2d"/><path d="M2 13v5h6" fill="none" stroke="#44434d" stroke-width="2"/>'],
  ['选择单根', 0, '<use href="#steps" color="#66656e"/><path d="M6 8h6v5H6" fill="none" stroke="#ee8a2d" stroke-width="2"/>'],
  ['选择表面', 1, '<path d="M3 2h15v16H3z" fill="#33323c"/><path d="M7 18v-6h4V6h7M12 18v-4h3" fill="none" stroke="#b9b9c3"/>'],
  ['选择图层', 1, `<path d="M10 4l7 4-7 4-7-4zM3 11l7 4 7-4" fill="none" stroke="#44434d" stroke-width="1.500"/>`],
  ['选择距离', 1, `<path d="M4 16L15 5M3 11v7M9 16H3M10 4l7 6" fill="none" stroke="#44434d" stroke-width="1.500"/>`],
  ['|', 1],
  ['组件对象', 0, '<path d="M3 2h15v16H3z" fill="#3f8130"/><path d="M9 5l4 11H5z" fill="#fff"/><circle cx="14" cy="6" r="2" fill="#fff"/>'],
  ['组件层次', 1, '<path d="M9 4l5 14H4z" fill="#3f8130"/><circle cx="15" cy="4" r="2.500" fill="#55545f"/>'],
  ['构件对象', 0, '<path d="M2 2h16v16H2z" fill="#2188c9"/><path d="M7 7h6v6H7zM4 4h3v3H4zM13 4h3v3h-3zM4 13h3v3H4zM13 13h3v3h-3z" fill="none" stroke="#fff" stroke-width="1.500"/>'],
  ['构件层次', 0, '<path d="M7 7h6v6H7zM3 3h4v4H3zM13 3h4v4h-4zM3 13h4v4H3zM13 13h4v4h-4z" fill="none" stroke="#2188c9" stroke-width="2"/>'],
  ['任务', 0, '<circle cx="8" cy="7" r="5" fill="none" stroke="#55545f" stroke-width="1.500"/><path d="M8 4v3h3M9 12v4h9" fill="none" stroke="#55545f" stroke-width="2"/>']
].map(button).join('');
document.getElementById('snaps').innerHTML = [
  ['捕捉参考点', 1, `<path d="M4 3h13v14H4zM4 3l13 14M17 3L4 17" ${S}/>`],
  ['捕捉端点', 1, `<path d="M4 4h13v13H4z" ${S}/>`],
  ['捕捉圆心', 0, `<circle cx="10" cy="10" r="6.500" ${S}/>`],
  ['捕捉中点', 1, `<path d="M10 4l6 11H4z" ${S}/>`],
  ['捕捉交点', 1, `<path d="M4 3l13 14M17 3L4 17" ${S}/>`],
  ['捕捉垂足', 1, `<path d="M3 17h14V3M11 17v-6h6" ${S}/>`],
  ['捕捉延长线', 1, `<path d="M8 3h9L8 17h9z" fill="none" stroke="#44434d" stroke-width="1.500"/><path d="M1 9h8" stroke="#44434d" stroke-width="2" stroke-dasharray="2 1"/>`],
  ['捕捉任意', 1, `<path d="M3 11l4-3 5 5 5-4" ${S}/>`],
  ['|', 0],
  ['捕捉最近点', 1, `<path d="M6 3h9L6 17h9z" ${S}/>`],
  ['捕捉线', 0, `<path d="M3 3h14v14M17 3L3 17" ${S}/>`],
  ['|', 0],
  ['捕捉尺寸', 1, '<path d="M3 3h15v15H3z" fill="#44434d"/><path d="M8 7h5v7H8z" fill="#f08a2b"/>'],
  ['捕捉模型', 1, '<path d="M5 5h11v11H5z" fill="#44434d"/><path d="M3 3l4 4M18 3l-4 4M3 18l4-4M18 18l-4-4" stroke="#f08a2b" stroke-width="3"/>']
].map(button).join('');
</script>
</body>
</html>
